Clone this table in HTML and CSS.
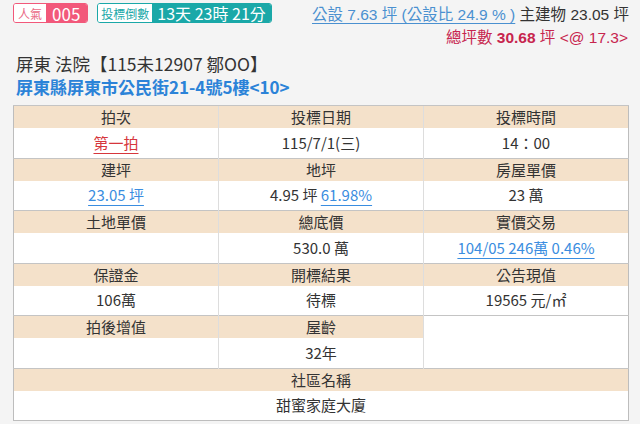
FILE: index.html
```html
<!DOCTYPE html>
<html lang="zh-Hant">
<head>
<meta charset="utf-8">
<link rel="stylesheet" href="styles.css">
</head>
<body>
<div class="page">
  <div class="top">
    <div class="badges">
      <span class="badge pop"><span class="lbl">人氣</span><span class="val">005</span></span>
      <span class="badge cd"><span class="lbl">投標倒數</span><span class="val">13天 23時 21分</span></span>
    </div>
    <div class="area">
      <div class="line1"><a class="pub">公設 7.63 坪 (公設比 24.9 % )</a> 主建物 23.05 坪</div>
      <div class="line2">總坪數 <b>30.68</b> 坪 &lt;@ 17.3&gt;</div>
    </div>
  </div>
  <div class="title">屏東 法院【115未12907 鄒OO】</div>
  <div class="addr">屏東縣屏東市公民街21-4號5樓&lt;10&gt;</div>
  <table class="info">
    <tr class="h"><td>拍次</td><td>投標日期</td><td>投標時間</td></tr>
    <tr class="d"><td><a class="red">第一拍</a></td><td>115/7/1(三)</td><td>14：00</td></tr>
    <tr class="h"><td>建坪</td><td>地坪</td><td>房屋單價</td></tr>
    <tr class="d"><td><a class="lnk">23.05 坪</a></td><td>4.95 坪 <a class="lnk">61.98%</a></td><td>23 萬</td></tr>
    <tr class="h"><td>土地單價</td><td>總底價</td><td>實價交易</td></tr>
    <tr class="d"><td></td><td>530.0 萬</td><td><a class="lnk">104/05 246萬 0.46%</a></td></tr>
    <tr class="h"><td>保證金</td><td>開標結果</td><td>公告現值</td></tr>
    <tr class="d"><td>106萬</td><td>待標</td><td>19565 元/㎡</td></tr>
    <tr class="h"><td>拍後增值</td><td>屋齡</td><td class="blank" rowspan="2"></td></tr>
    <tr class="d"><td></td><td>32年</td></tr>
    <tr class="h"><td colspan="3">社區名稱</td></tr>
    <tr class="d"><td colspan="3">甜蜜家庭大廈</td></tr>
  </table>
</div>
</body>
</html>
```

FILE: styles.css
```css
html, body {
  margin: 0;
  padding: 0;
  background: #f4f4f4;
}
body {
  font-family: "Noto Sans CJK TC", "Noto Sans", sans-serif;
  color: #333;
}
.page {
  padding: 3px 11px 0 13px;
}
.top {
  display: flex;
  justify-content: space-between;
  align-items: flex-start;
}
.badges {
  display: flex;
  gap: 9px;
}
.badge {
  display: flex;
  align-items: stretch;
  height: 20px;
  border-radius: 3px;
  box-sizing: border-box;
  white-space: nowrap;
}
.badge .lbl {
  display: flex;
  align-items: center;
  background: #fff;
  font-size: 12px;
  padding: 0 4px;
  border-radius: 2px 0 0 2px;
}
.badge .val {
  display: flex;
  align-items: center;
  color: #fff;
  font-size: 17px;
  padding: 0 6px;
  border-radius: 0 2px 2px 0;
}
.pop {
  border: 1px solid #f2587a;
}
.pop .lbl { color: #ea6b87; }
.pop .val {
  background: #f2587a;
  padding: 0 7px 0 6px;
}
.cd {
  border: 1px solid #1aa8a8;
}
.cd .lbl { color: #1aa8a8; padding: 0 3px; }
.cd .val {
  background: #1aa8a8;
  font-size: 16px;
  padding: 0 5px;
}
.area {
  text-align: right;
  font-family: "Liberation Sans", "Noto Sans CJK TC", sans-serif;
  font-size: 15.5px;
  padding-top: 1px;
}
.line1 {
  line-height: 22px;
  color: #333;
}
.pub {
  color: #4a90d0;
  text-decoration: underline;
  text-underline-offset: 3px;
}
.line2 {
  margin-top: 1px;
  line-height: 22px;
  color: #c7254e;
  padding-right: 1px;
}
.line2 b { font-weight: bold; }
.title {
  margin-top: 3px;
  padding-left: 3px;
  font-size: 17.5px;
  line-height: 23px;
  color: #333;
}
.addr {
  padding-left: 3px;
  font-size: 17px;
  line-height: 23px;
  font-weight: bold;
  color: #2b83d8;
}
.info {
  margin-top: 7px;
  width: 616px;
  border-collapse: collapse;
  table-layout: fixed;
  background: #fff;
  border: 1px solid #bdbdbd;
  font-size: 15px;
}
.info td {
  text-align: center;
  padding: 0;
  border-left: 1px solid #ddd;
  color: #333;
}
.info td:first-child { border-left: none; }
.info tr.h td {
  background: #f4e1ca;
  line-height: 22px;
  height: 22px;
  border-top: 1px solid #c4c4c4;
}
.info tr.d td {
  height: 29.5px;
  line-height: 28px;
}
.info tr.h td.blank { background: #fff; }
.red {
  color: #d6363c;
  text-decoration: underline;
  text-underline-offset: 4px;
}
.lnk {
  color: #3a8de0;
  text-decoration: underline;
  text-underline-offset: 4px;
}
```
